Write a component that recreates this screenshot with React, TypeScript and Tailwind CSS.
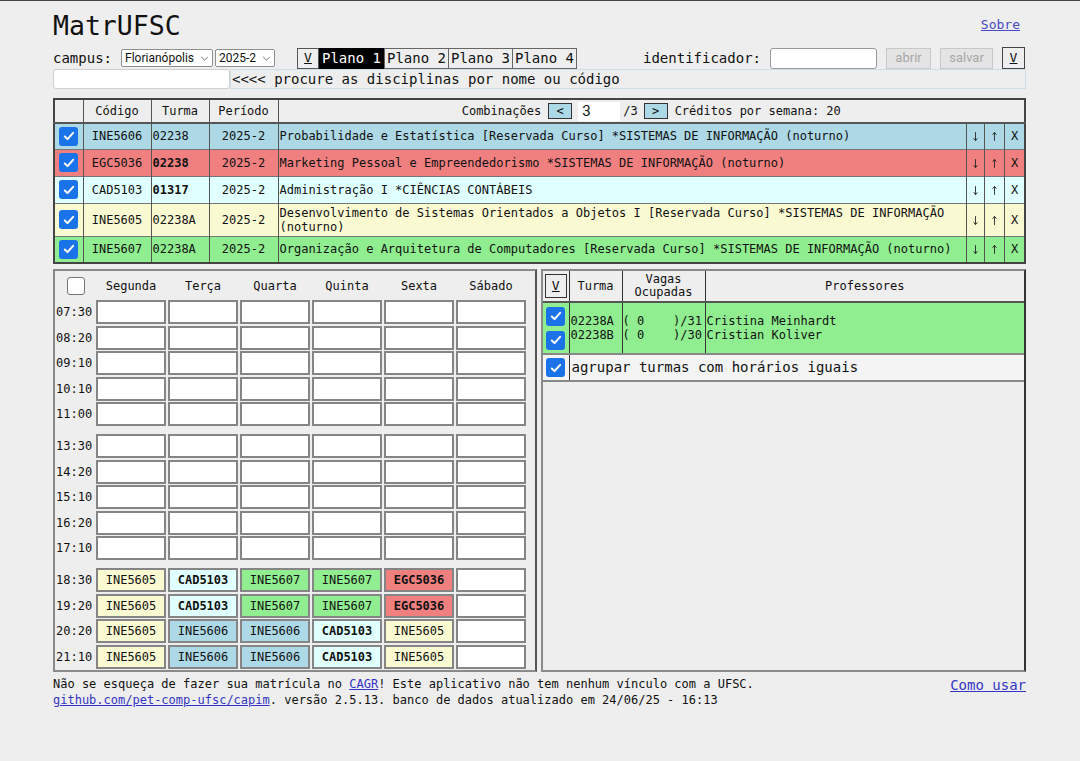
import React from 'react';

// MatrUFSC - planner screen

interface Materia {
  bg: string;
  code: string;
  turma: string;
  bold?: boolean;
  h: string;
  nome: string;
}

interface Slot {
  code: string;
  bg: string;
  bold?: boolean;
}

const materias: Materia[] = [
  { bg: 'bg-[#add8e6]', h: 'h-[26px]', code: 'INE5606', turma: '02238', nome: 'Probabilidade e Estatística [Reservada Curso] *SISTEMAS DE INFORMAÇÃO (noturno)' },
  { bg: 'bg-[#f08080]', h: 'h-[27px]', code: 'EGC5036', turma: '02238', bold: true, nome: 'Marketing Pessoal e Empreendedorismo *SISTEMAS DE INFORMAÇÃO (noturno)' },
  { bg: 'bg-[#e0ffff]', h: 'h-[27px]', code: 'CAD5103', turma: '01317', bold: true, nome: 'Administração I *CIÊNCIAS CONTÁBEIS' },
  { bg: 'bg-[#fafad2]', h: 'h-[33px]', code: 'INE5605', turma: '02238A', nome: 'Desenvolvimento de Sistemas Orientados a Objetos I [Reservada Curso] *SISTEMAS DE INFORMAÇÃO (noturno)' },
  { bg: 'bg-[#90ee90]', h: 'h-[27px]', code: 'INE5607', turma: '02238A', nome: 'Organização e Arquitetura de Computadores [Reservada Curso] *SISTEMAS DE INFORMAÇÃO (noturno)' },
];

const Y: Slot = { code: 'INE5605', bg: 'bg-[#fafad2]' };
const C: Slot = { code: 'CAD5103', bg: 'bg-[#e0ffff]', bold: true };
const G: Slot = { code: 'INE5607', bg: 'bg-[#90ee90]' };
const R: Slot = { code: 'EGC5036', bg: 'bg-[#f08080]', bold: true };
const B: Slot = { code: 'INE5606', bg: 'bg-[#add8e6]' };

const dias = ['Segunda', 'Terça', 'Quarta', 'Quinta', 'Sexta', 'Sábado'];

const manha = ['07:30', '08:20', '09:10', '10:10', '11:00'];
const tarde = ['13:30', '14:20', '15:10', '16:20', '17:10'];
const noite: [string, (Slot | null)[]][] = [
  ['18:30', [Y, C, G, G, R, null]],
  ['19:20', [Y, C, G, G, R, null]],
  ['20:20', [Y, B, B, C, Y, null]],
  ['21:10', [Y, B, B, C, Y, null]],
];

function Check({ checked = true }: { checked?: boolean }) {
  if (!checked) {
    return <span className="inline-block w-[18px] h-[18px] rounded-[3px] border border-[#767676] bg-white align-middle" />;
  }
  return (
    <span className="inline-flex items-center justify-center w-[19px] h-[19px] rounded-[3px] bg-[#1a73e8] align-middle">
      <svg viewBox="0 0 16 16" className="w-[14px] h-[14px]">
        <path d="M3.2 8.6l3.1 3 6.4-7.2" fill="none" stroke="white" strokeWidth="2.3" strokeLinecap="round" strokeLinejoin="round" />
      </svg>
    </span>
  );
}

function Chevron() {
  return (
    <svg viewBox="0 0 10 6" className="w-[9px] h-[5px]">
      <path d="M1 1l4 4 4-4" fill="none" stroke="#555" strokeWidth="1" />
    </svg>
  );
}

function Arrow({ up }: { up?: boolean }) {
  return (
    <svg viewBox="0 0 8 12" className="inline-block w-[7px] h-[11px] align-middle">
      {up ? (
        <path d="M4 11V1.5M1.8 4L4 1.2 6.2 4" fill="none" stroke="#222" strokeWidth="1" />
      ) : (
        <path d="M4 1v9.5M1.8 8L4 10.8 6.2 8" fill="none" stroke="#222" strokeWidth="1" />
      )}
    </svg>
  );
}

function Cell({ s }: { s: Slot | null }) {
  return (
    <div
      className={`w-[70px] h-[24px] border-2 border-[#858585] flex items-center justify-center text-[12px] ${s ? s.bg : 'bg-white'} ${s && s.bold ? 'font-bold' : ''}`}
    >
      {s ? s.code : ''}
    </div>
  );
}

function HoraRow({ hora, slots }: { hora: string; slots: (Slot | null)[] }) {
  return (
    <div className="flex gap-[2px] items-center">
      <div className="w-[39px] text-[12px] pl-[1px]">{hora}</div>
      {slots.map((s, i) => (
        <Cell key={i} s={s} />
      ))}
    </div>
  );
}

const vazio = [null, null, null, null, null, null];

export default function App() {
  return (
    <div className="min-h-screen bg-[#eeeeee] border-t border-[#444] font-['DejaVu_Sans_Mono',monospace] text-[#111]">
      <div className="ml-[53px] w-[973px]">
        {/* title */}
        <header className="flex justify-between items-start h-[46px]">
          <h1 className="text-[26.5px] leading-[30px] mt-[10px]">MatrUFSC</h1>
          <a href="#" className="text-[13px] mt-[14px] mr-[6px] underline text-[#4848c8]">Sobre</a>
        </header>

        {/* campus / planos / identificador */}
        <div className="flex items-center h-[22px]">
          <span className="text-[14px]">campus:</span>
          <div className="ml-[9px] w-[92px] h-[18px] bg-white border border-[#8f8f8f] rounded-[2px] flex items-center justify-between px-[3px] text-[12px] font-['Roboto',sans-serif]">
            <span>Florianópolis</span>
            <Chevron />
          </div>
          <div className="ml-[2px] w-[60px] h-[18px] bg-white border border-[#8f8f8f] rounded-[2px] flex items-center justify-between px-[3px] text-[12px] font-['Roboto',sans-serif]">
            <span>2025-2</span>
            <Chevron />
          </div>
          <div className="ml-[22px] flex h-[21px] text-[14px]">
            <span className="w-[22px] border border-[#555] flex items-center justify-center underline text-[13px]">V</span>
            <span className="w-[65px] bg-black text-white flex items-center justify-center">Plano 1</span>
            <span className="w-[65px] border border-[#666] flex items-center justify-center">Plano 2</span>
            <span className="w-[64px] border-y border-r border-[#666] flex items-center justify-center">Plano 3</span>
            <span className="w-[64px] border-y border-r border-[#666] flex items-center justify-center">Plano 4</span>
          </div>
          <span className="ml-[66px] text-[14px]">identificador:</span>
          <span className="ml-[9px] w-[107px] h-[21px] bg-white border border-[#9a9a9a] rounded-[3px]" />
          <span className="ml-[9px] w-[45px] h-[21px] bg-[#e4e4e4] border border-[#c8c8c8] text-[#a8a8a8] text-[13px] font-['Roboto',sans-serif] flex items-center justify-center">abrir</span>
          <span className="ml-[9px] w-[53px] h-[21px] bg-[#e4e4e4] border border-[#c8c8c8] text-[#a8a8a8] text-[13px] font-['Roboto',sans-serif] flex items-center justify-center">salvar</span>
          <span className="ml-[9px] w-[23px] h-[22px] border border-[#444] flex items-center justify-center underline text-[13px]">V</span>
        </div>

        {/* search */}
        <div className="flex h-[20px]">
          <span className="w-[177px] h-[20px] bg-white border border-[#cfcfcf] rounded-[3px]" />
          <div className="flex-1 border border-[#cbdfe5] flex items-center pl-[1px] text-[14px]">
            &lt;&lt;&lt;&lt; procure as disciplinas por nome ou código
          </div>
        </div>

        {/* selected courses */}
        <table className="mt-[9px] w-[973px] table-fixed border-collapse border-2 border-[#444] text-[12px]">
          <colgroup>
            <col className="w-[29px]" />
            <col className="w-[68px]" />
            <col className="w-[58px]" />
            <col className="w-[69px]" />
            <col />
            <col className="w-[18px]" />
            <col className="w-[20px]" />
            <col className="w-[20px]" />
          </colgroup>
          <thead>
            <tr className="h-[24px] bg-[#eeeeee] border-b-2 border-[#555]">
              <th className="border-r border-[#555]" />
              <th className="border-r border-[#555] font-normal">Código</th>
              <th className="border-r border-[#555] font-normal">Turma</th>
              <th className="border-r border-[#555] font-normal">Período</th>
              <th colSpan={4} className="font-normal">
                <div className="flex items-center justify-center">
                  <span>Combinações</span>
                  <span className="ml-[7px] w-[24px] h-[16px] bg-[#add8e6] border border-[#333] flex items-center justify-center">&lt;</span>
                  <span className="ml-[6px] w-[42px] h-[19px] bg-white text-left pl-[4px] text-[15px] leading-[19px] font-['Roboto',sans-serif]">3</span>
                  <span className="ml-[3px]">/3</span>
                  <span className="ml-[6px] w-[24px] h-[16px] bg-[#add8e6] border border-[#333] flex items-center justify-center">&gt;</span>
                  <span className="ml-[7px]">Créditos por semana: 20</span>
                </div>
              </th>
            </tr>
          </thead>
          <tbody>
            {materias.map((m) => (
              <tr key={m.code} className={`${m.bg} border-b border-[#777]`}>
                <td className={`text-center ${m.h} border-r border-[#555]`}><Check /></td>
                <td className="text-center border-r border-[#555]">{m.code}</td>
                <td className={`pl-[1px] border-r border-[#555] ${m.bold ? 'font-bold' : ''}`}>{m.turma}</td>
                <td className="text-center border-r border-[#555]">2025-2</td>
                <td className="pl-[1px] leading-[14px] border-r border-[#555]">{m.nome}</td>
                <td className="text-center border-r border-[#555]"><Arrow /></td>
                <td className="text-center border-r border-[#555]"><Arrow up /></td>
                <td className="text-center">X</td>
              </tr>
            ))}
          </tbody>
        </table>

        {/* timetable + turmas */}
        <div className="flex gap-[4px] mt-[5px]">
          <div className="w-[484px] h-[403px] border-2 border-[#8a8a8a] border-r-[#555] bg-[#eeeeee]">
            <div className="flex gap-[2px] h-[28px] items-center pt-[2px]">
              <div className="w-[39px] flex justify-center pl-[2px]"><Check checked={false} /></div>
              {dias.map((d) => (
                <div key={d} className="w-[70px] text-center text-[12px]">{d}</div>
              ))}
            </div>
            <div className="flex flex-col gap-[1.5px] mt-[1px]">
              {manha.map((h) => <HoraRow key={h} hora={h} slots={vazio} />)}
            </div>
            <div className="flex flex-col gap-[1.5px] mt-[8px]">
              {tarde.map((h) => <HoraRow key={h} hora={h} slots={vazio} />)}
            </div>
            <div className="flex flex-col gap-[1.5px] mt-[8px]">
              {noite.map(([h, s]) => <HoraRow key={h} hora={h} slots={s} />)}
            </div>
          </div>

          <div className="w-[485px] h-[403px] border-2 border-[#8a8a8a] border-r-[#333] bg-[#eeeeee]">
            <table className="w-full table-fixed border-collapse text-[12px]">
              <colgroup>
                <col className="w-[26px]" />
                <col className="w-[53px]" />
                <col className="w-[83px]" />
                <col />
              </colgroup>
              <thead>
                <tr className="h-[31px] border-b-2 border-[#555]">
                  <th className="border-r border-[#333] font-normal">
                    <span className="inline-flex w-[22px] h-[24px] border border-[#333] items-center justify-center underline text-[13px]">V</span>
                  </th>
                  <th className="border-r border-[#333] font-normal">Turma</th>
                  <th className="border-r border-[#333] font-normal leading-[13px]">Vagas<br />Ocupadas</th>
                  <th className="font-normal">Professores</th>
                </tr>
              </thead>
              <tbody>
                <tr className="h-[52px] bg-[#90ee90] border-b-2 border-[#888]">
                  <td className="border-r border-[#333]">
                    <div className="flex flex-col items-center gap-[5px]">
                      <Check />
                      <Check />
                    </div>
                  </td>
                  <td className="border-r border-[#333] pl-[1px] leading-[14px]">02238A<br />02238B</td>
                  <td className="border-r border-[#333] leading-[14px] whitespace-pre">{'( 0    )/31\n( 0    )/30'}</td>
                  <td className="pl-[1px] leading-[14px]">Cristina Meinhardt<br />Cristian Koliver</td>
                </tr>
                <tr className="h-[27px] bg-[#f4f4f4] border-b-2 border-[#888]">
                  <td className="border-r border-[#333] text-center"><Check /></td>
                  <td colSpan={3} className="pl-[2px] text-[14px]">agrupar turmas com horários iguais</td>
                </tr>
              </tbody>
            </table>
          </div>
        </div>

        {/* footer */}
        <footer className="mt-[4px] flex justify-between text-[12px] leading-[16px]">
          <div>
            <p>
              Não se esqueça de fazer sua matrícula no <a href="#" className="underline text-[#3434c4]">CAGR</a>! Este aplicativo não tem nenhum vínculo com a UFSC.
            </p>
            <p>
              <a href="#" className="underline text-[#3434c4]">github.com/pet-comp-ufsc/capim</a>. versão 2.5.13. banco de dados atualizado em 24/06/25 - 16:13
            </p>
          </div>
          <a href="#" className="text-[14px] leading-[18px] underline text-[#3434c4]">Como usar</a>
        </footer>
      </div>
    </div>
  );
}
